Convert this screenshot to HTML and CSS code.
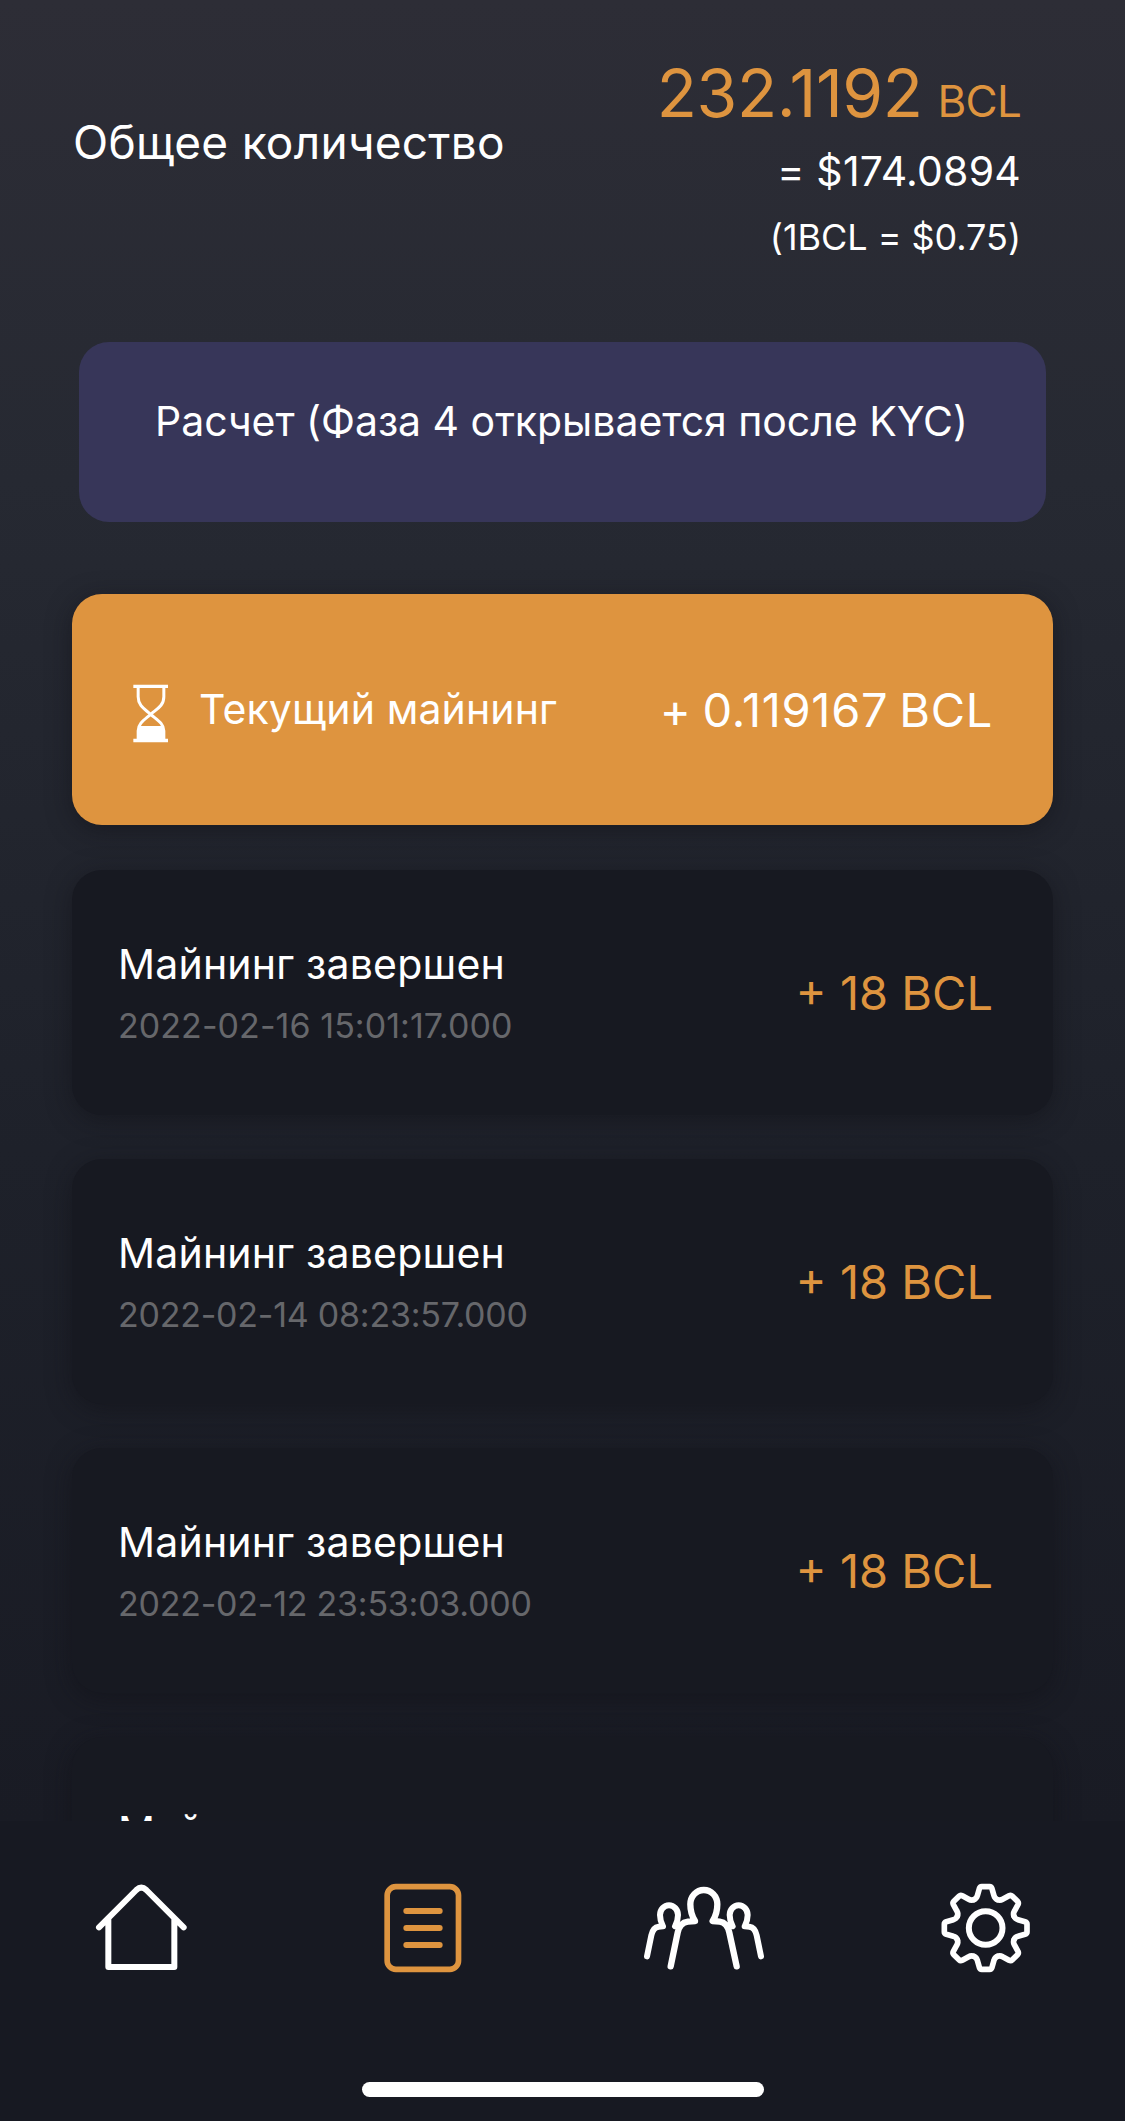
FILE: index.html
```html
<!DOCTYPE html>
<html lang="ru">
<head>
<meta charset="utf-8">
<title>BCL</title>
<link rel="stylesheet" href="styles.css">
</head>
<body>
<main class="screen">
  <header class="total">
    <h1 class="total-label">Общее количество</h1>
    <div class="total-values">
      <div class="total-amount"><span>232.1192</span><span class="unit">BCL</span></div>
      <div class="total-usd">= $174.0894</div>
      <div class="total-rate">(1BCL = $0.75)</div>
    </div>
  </header>

  <div class="phase">Расчет (Фаза 4 открывается после KYC)</div>

  <section class="list">
    <article class="card current">
      <svg class="hourglass" viewBox="0 0 180 240" fill="none" stroke="#fff">
        <path d="M40 49H144M40 211.500H144" stroke-width="10"/>
        <path d="M54.500 50V80C54.500 108 74 117 92 133C110 149 131.500 160 131.500 182V210M131.500 50V80C131.500 108 110 117 92 133C74 149 54.500 160 54.500 182V210" stroke-width="9"/>
        <path d="M57 168H129L133 182V210H53V182Z" fill="#fff" stroke="none"/>
      </svg>
      <div class="current-label">Текущий майнинг</div>
      <div class="amount">+ 0.119167 BCL</div>
    </article>
    <article class="card">
      <div class="info"><div class="title">Майнинг завершен</div><time class="date">2022-02-16 15:01:17.000</time></div>
      <div class="amount">+ 18 BCL</div>
    </article>
    <article class="card">
      <div class="info"><div class="title">Майнинг завершен</div><time class="date tight">2022-02-14 08:23:57.000</time></div>
      <div class="amount">+ 18 BCL</div>
    </article>
    <article class="card">
      <div class="info"><div class="title">Майнинг завершен</div><time class="date tight">2022-02-12 23:53:03.000</time></div>
      <div class="amount">+ 18 BCL</div>
    </article>
    <article class="card">
      <div class="info"><div class="title">Майнинг завершен</div></div>
    </article>
  </section>
</main>

<footer class="bottom">
  <nav class="tabs">
    <a class="tab"><svg width="120" height="110" viewBox="2 30 360 330">
      <path d="M56 202L168 90Q183 76 198 90L310 202M84 176V321H282V176" stroke-width="18"/>
    </svg></a>
    <a class="tab active"><svg width="110" height="110" viewBox="-9 0 330 330">
      <rect x="51.500" y="50" width="214" height="248" rx="26" stroke-width="17"/>
      <path d="M109 123H209M109 174H209M109 225H209" stroke-width="18"/>
    </svg></a>
    <a class="tab"><svg width="150" height="110" viewBox="-6 0 450 330">
      <path d="M122 289L143 188Q149 158 174 155L195 153C186 139 181 124 181 103A40.500 43 0 0 1 262 103C262 124 257 139 248 153L269 155Q292 158 298 188L320 289" stroke-width="19"/>
      <path d="M51 259L64 196Q69 172 86 170L99 169C93 158 90 148 90 135A27 29 0 0 1 144 135C144 148 141 158 135 169L147 166M393 259L380 196Q375 172 358 170L344 169C350 158 353 148 353 135A27 29 0 0 0 299 135C299 148 302 158 308 169L296 166" stroke-width="18"/>
    </svg></a>
    <a class="tab"><svg width="120" height="110" viewBox="-2 0 360 330">
      <defs><path id="tooth" d="M-35.200 -85C-30 -87.200 -27 -89 -25 -97L-19 -118Q-17 -124 -12 -124H12Q17 -124 19 -118L25 -97C27 -89 30 -87.200 35.200 -85"/></defs>
      <g transform="translate(183 174)" stroke-width="17">
        <circle r="50.500" stroke-width="18"/>
        <use href="#tooth"/>
        <use href="#tooth" transform="rotate(45)"/>
        <use href="#tooth" transform="rotate(90)"/>
        <use href="#tooth" transform="rotate(135)"/>
        <use href="#tooth" transform="rotate(180)"/>
        <use href="#tooth" transform="rotate(225)"/>
        <use href="#tooth" transform="rotate(270)"/>
        <use href="#tooth" transform="rotate(315)"/>
      </g>
    </svg></a>
  </nav>
  <div class="home-indicator"></div>
</footer>
</body>
</html>
```
FILE: styles.css
```css
* { box-sizing: border-box; margin: 0; }

body {
  width: 1125px;
  height: 2121px;
  overflow: hidden;
  display: flex;
  flex-direction: column;
  background: #171922;
  color: #fff;
  font-family: "Inter", "Liberation Sans", sans-serif;
  white-space: nowrap;
}

.screen {
  height: 1821px;
  flex: none;
  overflow: hidden;
  padding-top: 48px;
  background: linear-gradient(#2d2d36 0, #262932 480px, #1e212a 1150px, #191b24 1821px);
}

.total {
  display: flex;
  justify-content: space-between;
  align-items: center;
  height: 222px;
  padding: 0 104px 0 73px;
}
.total-label {
  font-size: 46px;
  font-weight: 400;
  letter-spacing: .27px;
  padding-bottom: 34px;
}
.total-values { text-align: right; }
.total-amount {
  display: flex;
  justify-content: flex-end;
  align-items: baseline;
  gap: 15px;
  height: 90px;
  color: #de943f;
  font-size: 66px;
  line-height: 90px;
  letter-spacing: -.46px;
}
.unit { font-size: 44px; line-height: 1; letter-spacing: -.8px; }
.total-usd { font-size: 41px; line-height: 66px; letter-spacing: .2px; }
.total-rate { font-size: 36px; line-height: 66px; letter-spacing: -.05px; }

.phase {
  width: 967px;
  height: 180px;
  margin: 72px 0 0 79px;
  padding: 54px 2px 0 0;
  border-radius: 30px;
  background: #373659;
  font-size: 41px;
  line-height: 50px;
  letter-spacing: -.03px;
  text-align: center;
}

.list {
  display: flex;
  flex-direction: column;
  gap: 44px;
  padding: 72px 72px 0;
}
.card {
  display: flex;
  align-items: center;
  justify-content: space-between;
  flex: none;
  height: 245px;
  padding: 2px 60px 0 46px;
  border-radius: 30px;
  background: #171921;
  box-shadow: 0 5px 24px rgba(15, 15, 22, .5);
}
.current {
  height: 231px;
  margin-bottom: 1px;
  padding: 0 60px 0 48px;
  background: #de943f;
}
.hourglass { width: 60px; height: 80px; }
.current-label {
  flex: 1;
  margin-left: 19px;
  padding-bottom: 1px;
  font-size: 41px;
  letter-spacing: .12px;
}
.amount { font-size: 47px; color: #de943f; padding-bottom: 2px; }
.current .amount { color: #fff; padding: 0; letter-spacing: .7px; word-spacing: -3px; }
.title { font-size: 41px; line-height: 60px; letter-spacing: .2px; }
.date {
  display: block;
  padding-top: 2px;
  margin-bottom: -2px;
  color: #66676b;
  font-size: 34px;
  line-height: 60px;
  letter-spacing: .06px;
}
.date.tight { letter-spacing: -.24px; }
.card:last-child { align-items: flex-start; padding-top: 64px; }

.bottom {
  flex: 1;
  display: flex;
  flex-direction: column;
  align-items: center;
  justify-content: space-between;
  padding: 49px 0 24px;
  background: #171922;
}
.tabs { display: flex; width: 100%; }
.tab { flex: 1; display: flex; justify-content: center; color: #fff; }
.tab.active { color: #de943f; }
.tab svg {
  fill: none;
  stroke: currentColor;
  stroke-linecap: round;
  stroke-linejoin: round;
}
.home-indicator {
  width: 402px;
  height: 15px;
  border-radius: 8px;
  background: #fff;
}
```
